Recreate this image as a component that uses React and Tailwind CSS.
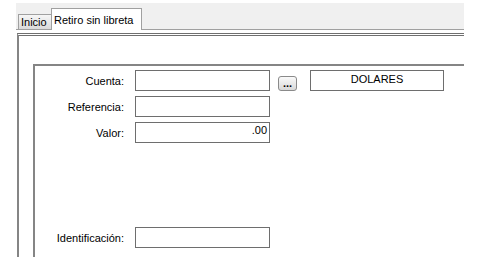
import React from "react";

const font = { fontFamily: '"Liberation Sans", Arial, sans-serif' };

function Field({ label, value = "", wide = "w-[135px]" }) {
  return (
    <div className="flex items-center">
      <div className="w-[90px] text-right pr-[1px] pt-[1px]">{label}</div>
      <div
        className={`${wide} h-[21px] ml-[10px] border border-[#6e6e6e] bg-white text-right pr-[2px] leading-[13px] pt-[1px]`}
      >
        {value}
      </div>
    </div>
  );
}

export default function App() {
  return (
    <div className="w-[479px] h-[268px] bg-white text-black text-[11px] overflow-hidden" style={font}>
      <div className="w-[464px] h-[257px] overflow-hidden">
        {/* Tabs */}
        <div className="h-[27px] mt-[3px] ml-[16px] bg-[#f0f0f0] border-b border-[#a0a0a0] flex items-end pl-[2px]">
          <div className="h-[15px] w-[34px] border border-b-0 border-[#a0a0a0] bg-gradient-to-b from-[#f6f6f6] to-[#dadada] pl-[2px] leading-[14px] -mr-px">
            Inicio
          </div>
          <div className="relative h-[22px] w-[91px] border border-b-0 border-[#a0a0a0] bg-white pl-[2px] pt-[5px] leading-[12px] -mb-px">
            Retiro sin libreta
          </div>
        </div>

        {/* Tab page */}
        <div className="ml-[16px] pt-[3px]">
          <div className="ml-[1px] h-[240px] border-l-2 border-l-[#858585] border-t-[3px] [border-top-style:double] border-t-[#6f6f6f]">
            {/* Group box */}
            <div className="ml-[14px] mt-[28px] w-[520px] h-[220px] border-l-2 border-t-2 border-[#858585] pt-[4px]">
              <div className="flex flex-col gap-[5px]">
                <div className="flex items-end">
                  <Field label="Cuenta:" />
                  <button className="ml-[8px] w-[19px] h-[15px] rounded-[3px] border border-[#8a8a8a] bg-gradient-to-b from-[#fafafa] to-[#d8d8d8] text-[11px] font-bold leading-[8px] flex items-end justify-center pb-[3px]">
                    ...
                  </button>
                  <div className="ml-[13px] w-[134px] h-[21px] border border-[#6e6e6e] text-center leading-[13px] pt-[2px]">
                    DOLARES
                  </div>
                </div>
                <Field label="Referencia:" />
                <Field label="Valor:" value=".00" />
              </div>
              <div className="mt-[84px]">
                <Field label="Identificación:" />
              </div>
            </div>
          </div>
        </div>
      </div>
    </div>
  );
}
